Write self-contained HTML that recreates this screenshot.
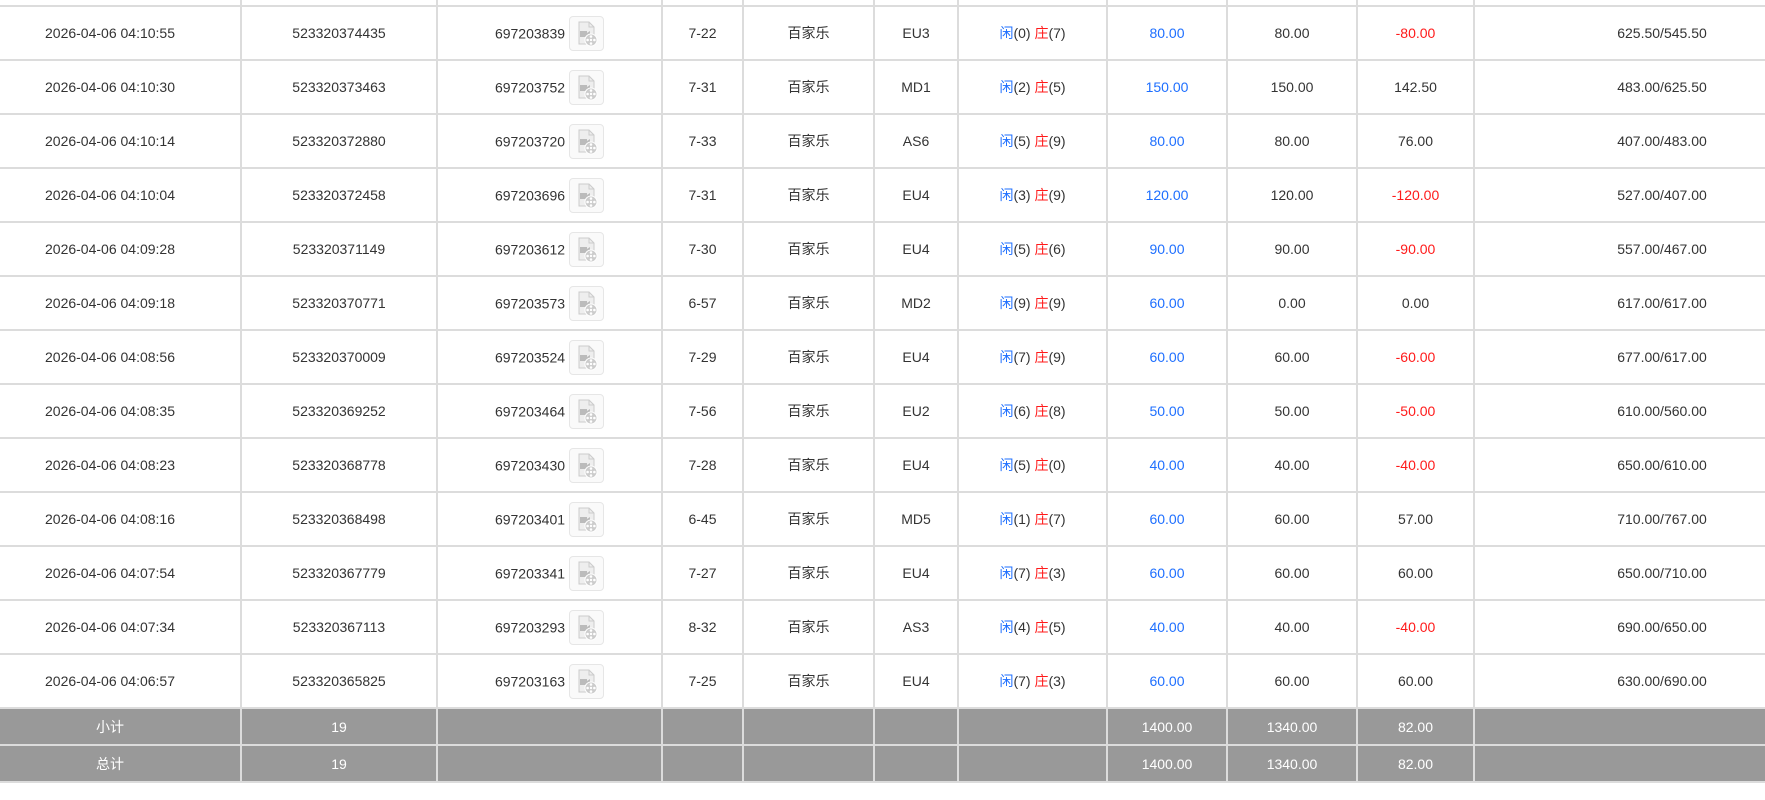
<!DOCTYPE html>
<html><head><meta charset="utf-8"><style>
html,body{margin:0;padding:0;width:1765px;height:800px;overflow:hidden;background:#fff;}
table{position:absolute;left:-22px;top:-49px;border-collapse:collapse;table-layout:fixed;width:1787px;font-family:"Liberation Sans","Noto Sans CJK SC",sans-serif;font-size:14px;color:#333;}
td{border:2px solid #dcdcdc;text-align:center;padding:0;height:52px;white-space:nowrap;vertical-align:middle;}
tr.s td{background:#999;color:#fff;height:35px;}
.b{color:#1e6fff}.r{color:#ff1a1a}
.n{vertical-align:middle}
.ic{display:inline-block;width:33px;height:33px;border:1px solid #e6e6e6;border-radius:4px;vertical-align:middle;margin-left:4px;background:#fafafa;}
.ic svg{display:block;margin:3px auto 0}
</style></head><body>
<table>
<colgroup><col style="width:262px"><col style="width:196px"><col style="width:225px"><col style="width:81px"><col style="width:131px"><col style="width:84px"><col style="width:149px"><col style="width:120px"><col style="width:130px"><col style="width:117px"><col style="width:292px"></colgroup>
<tr><td></td><td></td><td></td><td></td><td></td><td></td><td></td><td></td><td></td><td></td><td></td></tr>
</table>
<script>
var d=[
["2026-04-06 04:10:55","523320374435","697203839","7-22","EU3","0","7","80.00","80.00","-80.00","625.50/545.50"],
["2026-04-06 04:10:30","523320373463","697203752","7-31","MD1","2","5","150.00","150.00","142.50","483.00/625.50"],
["2026-04-06 04:10:14","523320372880","697203720","7-33","AS6","5","9","80.00","80.00","76.00","407.00/483.00"],
["2026-04-06 04:10:04","523320372458","697203696","7-31","EU4","3","9","120.00","120.00","-120.00","527.00/407.00"],
["2026-04-06 04:09:28","523320371149","697203612","7-30","EU4","5","6","90.00","90.00","-90.00","557.00/467.00"],
["2026-04-06 04:09:18","523320370771","697203573","6-57","MD2","9","9","60.00","0.00","0.00","617.00/617.00"],
["2026-04-06 04:08:56","523320370009","697203524","7-29","EU4","7","9","60.00","60.00","-60.00","677.00/617.00"],
["2026-04-06 04:08:35","523320369252","697203464","7-56","EU2","6","8","50.00","50.00","-50.00","610.00/560.00"],
["2026-04-06 04:08:23","523320368778","697203430","7-28","EU4","5","0","40.00","40.00","-40.00","650.00/610.00"],
["2026-04-06 04:08:16","523320368498","697203401","6-45","MD5","1","7","60.00","60.00","57.00","710.00/767.00"],
["2026-04-06 04:07:54","523320367779","697203341","7-27","EU4","7","3","60.00","60.00","60.00","650.00/710.00"],
["2026-04-06 04:07:34","523320367113","697203293","8-32","AS3","4","5","40.00","40.00","-40.00","690.00/650.00"],
["2026-04-06 04:06:57","523320365825","697203163","7-25","EU4","7","3","60.00","60.00","60.00","630.00/690.00"]];
var ic='<span class="ic"><svg width="26" height="27" viewBox="0 0 26 27"><path d="M5 2h10l5 5v17H5z" fill="#eee" stroke="#ccc"/><path d="M15 2v5h5" fill="none" stroke="#ccc"/><rect x="6" y="11" width="7" height="6" fill="#bbb"/><path d="M13 13l3-2v6l-3-2z" fill="#bbb"/><circle cx="17" cy="20" r="6" fill="#ccc" stroke="#fff"/><circle cx="17" cy="20" r="1.2" fill="#fff"/><circle cx="17" cy="16.5" r="1.3" fill="#fff"/><circle cx="17" cy="23.5" r="1.3" fill="#fff"/><circle cx="13.6" cy="20" r="1.3" fill="#fff"/><circle cx="20.4" cy="20" r="1.3" fill="#fff"/></svg></span>';
var h='';
d.forEach(function(r){h+='<tr><td>'+r[0]+'</td><td>'+r[1]+'</td><td><span class="n">'+r[2]+'</span>'+ic+'</td><td>'+r[3]+'</td><td>百家乐</td><td>'+r[4]+'</td><td><span class="b">闲</span>('+r[5]+') <span class="r">庄</span>('+r[6]+')</td><td class="b">'+r[7]+'</td><td>'+r[8]+'</td><td'+(r[9][0]=='-'?' class="r"':'')+'>'+r[9]+'</td><td style="padding-left:84px">'+r[10]+'</td></tr>';});
['小计','总计'].forEach(function(t){h+='<tr class="s"><td>'+t+'</td><td>19</td><td></td><td></td><td></td><td></td><td></td><td>1400.00</td><td>1340.00</td><td>82.00</td><td></td></tr>';});
document.querySelector('table').insertAdjacentHTML('beforeend',h);
</script>
</body></html>
